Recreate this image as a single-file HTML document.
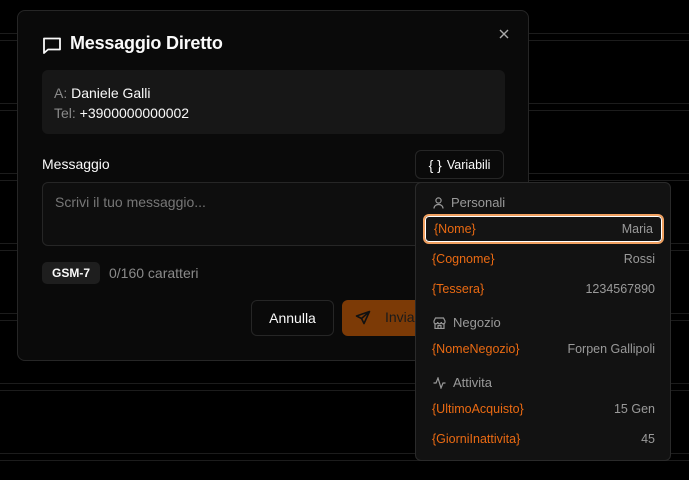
<!DOCTYPE html>
<html><head><meta charset="utf-8"><style>
*{box-sizing:border-box;margin:0;padding:0}
body{width:689px;height:480px;background:#000;position:relative;overflow:hidden;font-family:"Liberation Sans",sans-serif;color:#fafafa}
.ln{position:absolute;left:0;width:689px;height:1px;background:#1c1c1c}
.modal{position:absolute;left:17px;top:10px;width:512px;height:351px;background:#0a0a0a;border:1px solid #262626;border-radius:8px}
.abs{position:absolute}
.info{left:24px;top:59px;width:463px;height:64px;background:#171717;border-radius:6px;font-size:14px;padding:13px 12px;line-height:20px}
.muted{color:#8a8a8a}
.btn{border:1px solid #262626;border-radius:6px;background:#0a0a0a}
.dd{position:absolute;left:415px;top:182px;width:256px;height:279px;background:#121212;border:1px solid #2a2a2a;border-radius:6px}
.hd{position:absolute;left:17px;font-size:13px;color:#9a9a9a;display:flex;align-items:center;gap:7px}
.row{position:absolute;left:7px;width:241px;height:30px;display:flex;justify-content:space-between;align-items:center;padding:0 9px;font-size:12.5px}
.row .k{color:#ea6a12}.row .v{color:#9a9a9a}
</style></head><body>
<div class="ln" style="top:33px"></div><div class="ln" style="top:40px"></div>
<div class="ln" style="top:103px"></div><div class="ln" style="top:110px"></div>
<div class="ln" style="top:173px"></div><div class="ln" style="top:180px"></div>
<div class="ln" style="top:243px"></div><div class="ln" style="top:250px"></div>
<div class="ln" style="top:313px"></div><div class="ln" style="top:320px"></div>
<div class="ln" style="top:383px"></div><div class="ln" style="top:390px"></div>
<div class="ln" style="top:453px"></div><div class="ln" style="top:460px"></div>
<div class="modal">
 <svg class="abs" style="left:24px;top:25px" width="20" height="19" viewBox="0 0 20 19" fill="none" stroke="#fafafa" stroke-width="1.8" stroke-linejoin="round"><path d="M2 2.5h16v11H6l-4 3.5z"/></svg>
 <div class="abs" style="left:52px;top:22px;font-size:18px;font-weight:bold;letter-spacing:-0.2px">Messaggio Diretto</div>
 <svg class="abs" style="left:481px;top:18px" width="10" height="10" viewBox="0 0 10 10" stroke="#aaa" stroke-width="1.4"><path d="M1 1l8 8M9 1l-8 8"/></svg>
 <div class="abs info"><span class="muted">A:</span> Daniele Galli<br><span class="muted">Tel:</span> +3900000000002</div>
 <div class="abs" style="left:24px;top:145px;font-size:14px">Messaggio</div>
 <div class="abs btn" style="left:397px;top:139px;width:89px;height:29px;font-size:12.5px;display:flex;align-items:center;justify-content:center;gap:5px"><span style="font-size:14px">{ }</span>Variabili</div>
 <div class="abs btn" style="left:24px;top:171px;width:463px;height:64px;background:#0e0e0e;padding:11px 12px;font-size:14px;color:#777">Scrivi il tuo messaggio...</div>
 <div class="abs" style="left:24px;top:251px;width:58px;height:22px;background:#1e1e1e;border-radius:5px;font-size:12px;font-weight:bold;display:flex;align-items:center;justify-content:center">GSM-7</div>
 <div class="abs muted" style="left:91px;top:254px;font-size:14px">0/160 caratteri</div>
 <div class="abs btn" style="left:233px;top:289px;width:83px;height:36px;font-size:14px;display:flex;align-items:center;justify-content:center">Annulla</div>
 <div class="abs" style="left:324px;top:289px;width:100px;height:36px;background:#7c3a06;border-radius:6px;font-size:14px;color:#1a1a1a">
  <svg class="abs" style="left:13px;top:10px" width="16" height="16" viewBox="0 0 16 16" fill="none" stroke="#111" stroke-width="1.6" stroke-linejoin="round"><path d="M14.5 1.5L1.5 6l5 2.5 2.5 5z M6.5 8.5l8-7"/></svg>
  <span class="abs" style="left:43px;top:9px">Invia</span></div>
</div>
<div class="dd">
 <div class="hd" style="top:12px"><svg width="11" height="12" viewBox="0 0 11 12" fill="none" stroke="#999" stroke-width="1.2"><circle cx="5.5" cy="3.5" r="2.6"/><path d="M1 11.5c0-2.5 2-4 4.5-4s4.5 1.5 4.5 4"/></svg>Personali</div>
 <div class="row" style="top:31px;border:2px solid #f0a060;box-shadow:0 0 0 1px #fff inset;border-radius:6px;background:#141414"><span class="k">{Nome}</span><span class="v">Maria</span></div>
 <div class="row" style="top:61px"><span class="k">{Cognome}</span><span class="v">Rossi</span></div>
 <div class="row" style="top:91px"><span class="k">{Tessera}</span><span class="v">1234567890</span></div>
 <div class="hd" style="top:132px"><svg width="13" height="12" viewBox="0 0 13 12" fill="none" stroke="#999" stroke-width="1.2"><path d="M1 4l1.5-3h8L12 4v1a1.8 1.8 0 0 1-3.7 0 1.8 1.8 0 0 1-3.6 0A1.8 1.8 0 0 1 1 5z M2 6v5.5h9V6 M5 11.5V8.5h3v3"/></svg>Negozio</div>
 <div class="row" style="top:151px"><span class="k">{NomeNegozio}</span><span class="v">Forpen Gallipoli</span></div>
 <div class="hd" style="top:192px"><svg width="13" height="12" viewBox="0 0 13 12" fill="none" stroke="#999" stroke-width="1.2"><path d="M0.5 6h2.5l2-5 3 10 2-5h2.5"/></svg>Attivita</div>
 <div class="row" style="top:211px"><span class="k">{UltimoAcquisto}</span><span class="v">15 Gen</span></div>
 <div class="row" style="top:241px"><span class="k">{GiorniInattivita}</span><span class="v">45</span></div>
</div>
</body></html>
